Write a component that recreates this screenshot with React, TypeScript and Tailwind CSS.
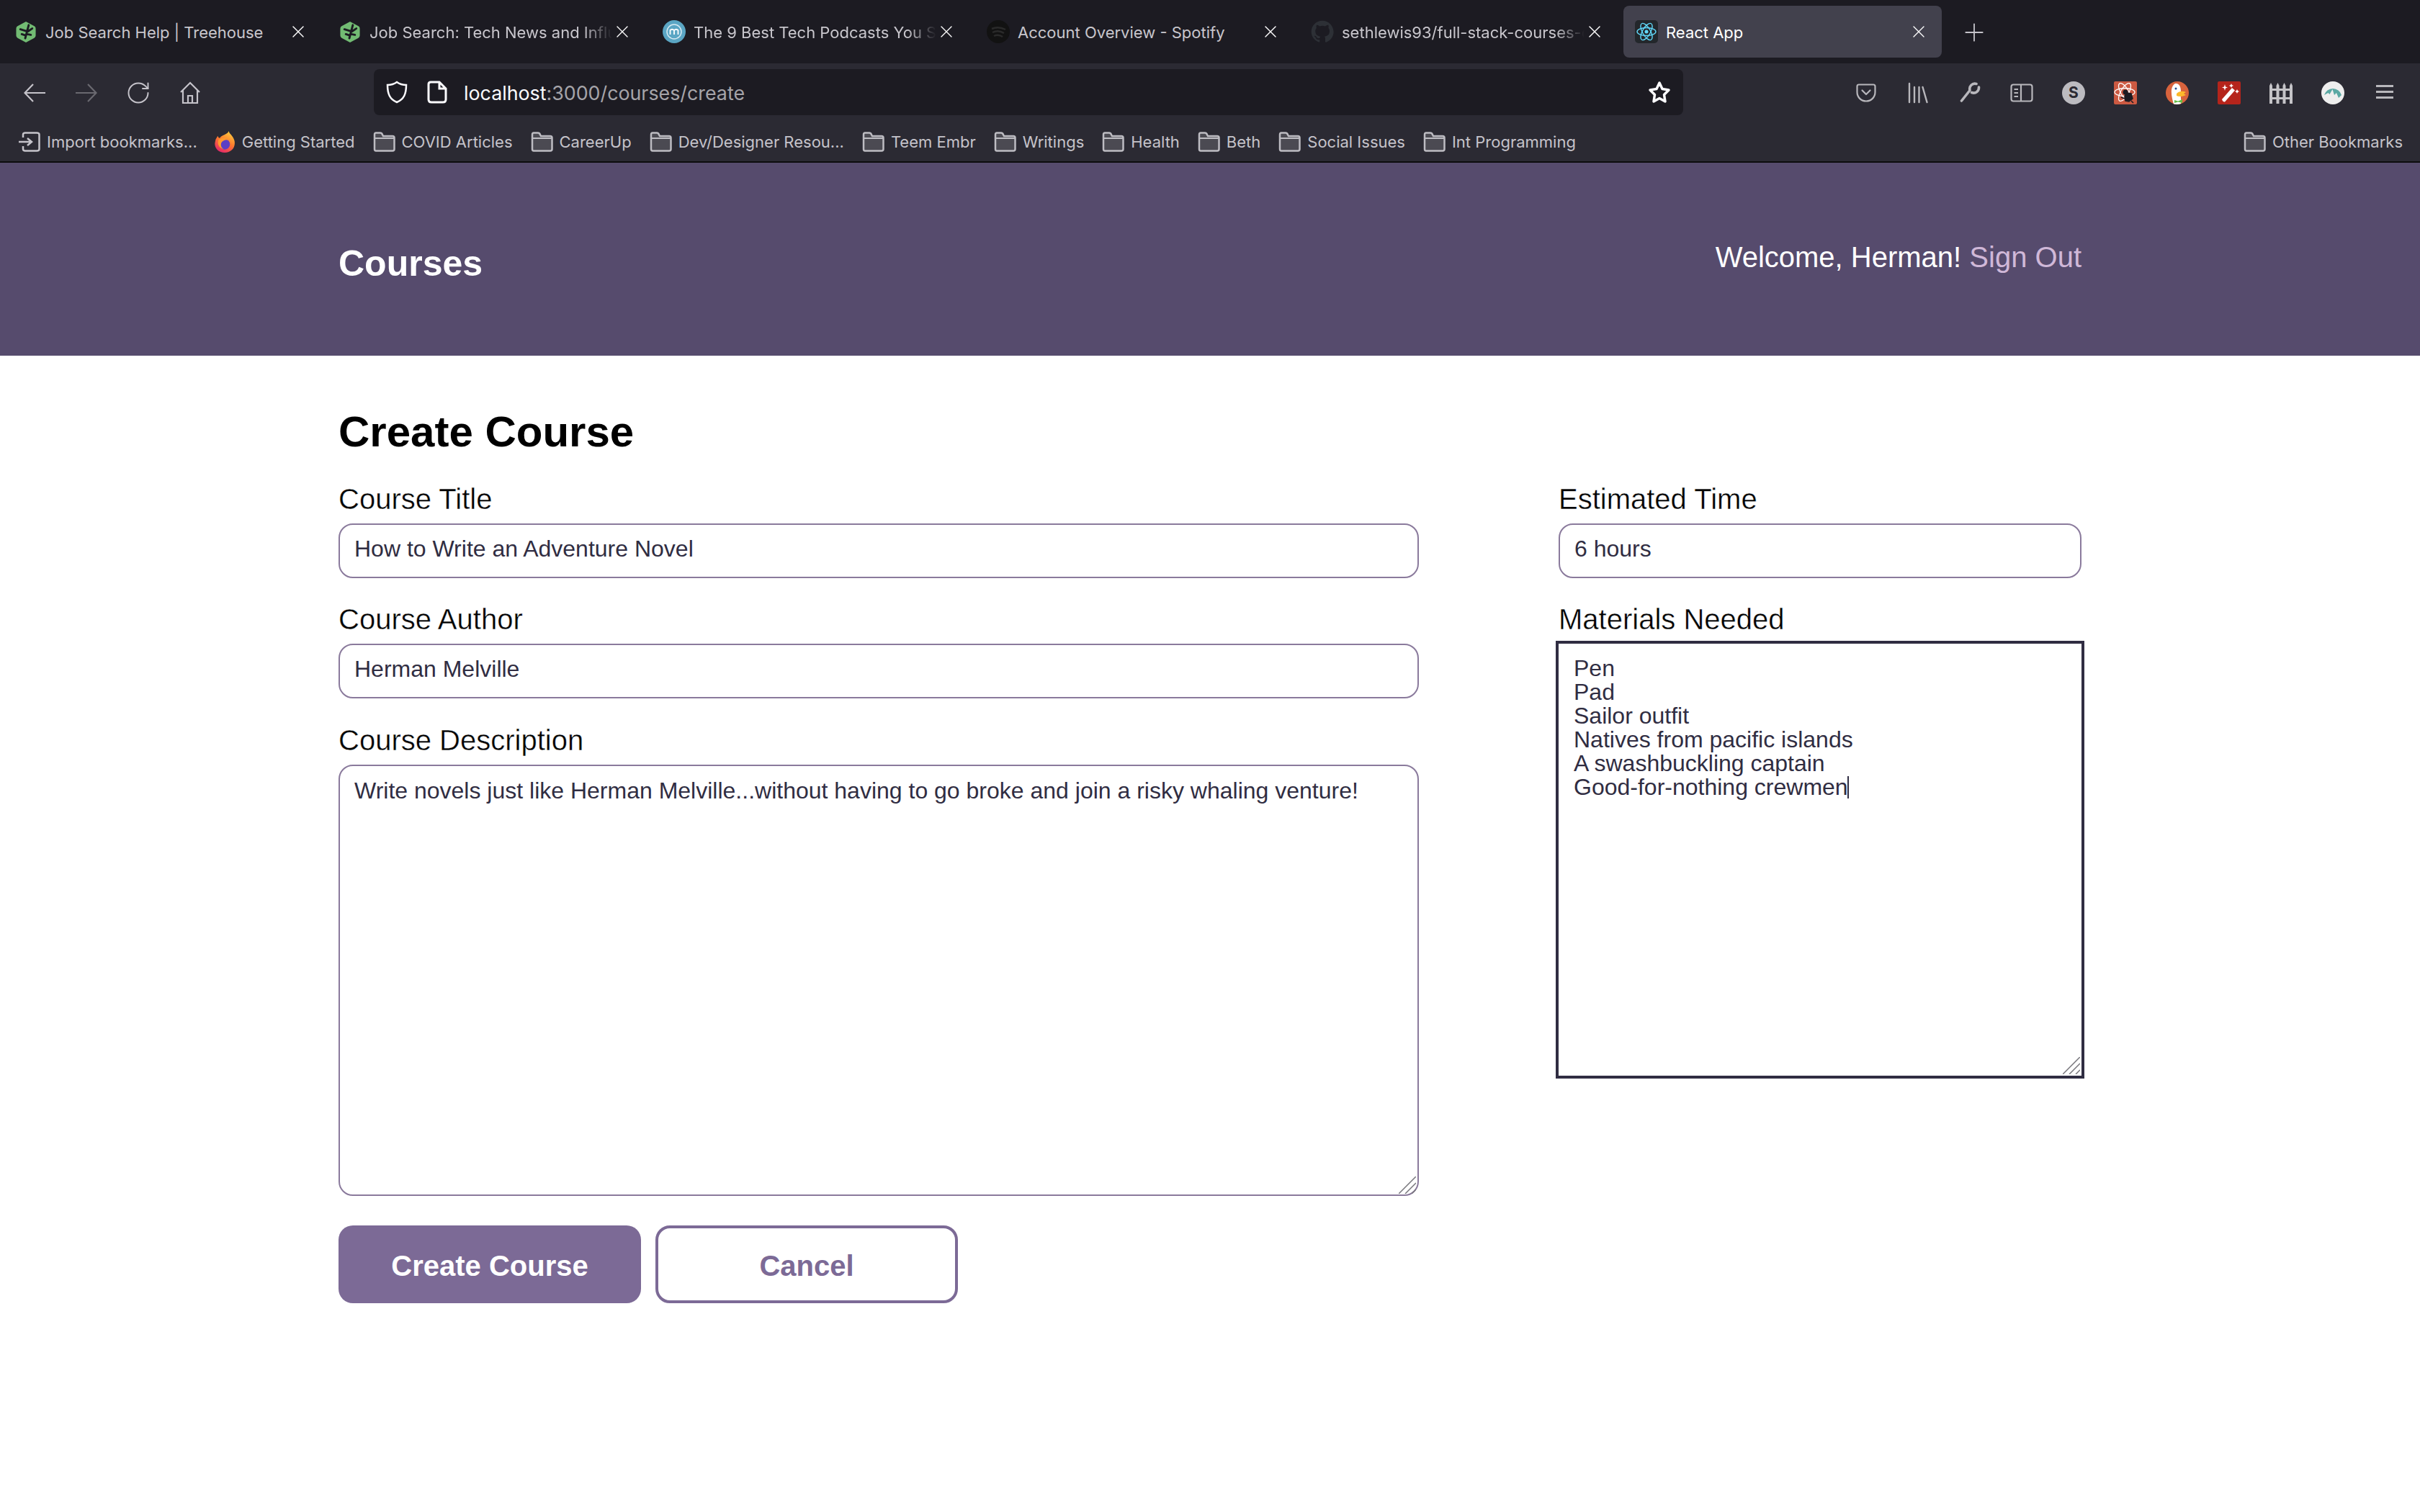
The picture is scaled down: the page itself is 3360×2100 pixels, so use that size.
import { RotateCw, Plus, X } from "lucide-react";

const TreehouseIcon = () => (
  <div className="w-8 h-8 shrink-0 flex items-center justify-center">
    <svg viewBox="0 0 28 32" className="w-[28px] h-[31px]">
      <path d="M14 1 L26 7.500 Q28 8.500 28 11 V21 Q28 23.500 26 24.500 L14 31 L2 24.500 Q0 23.500 0 21 V11 Q0 8.500 2 7.500 Z" fill="#72bb73" />
      <path d="M18 6 L13 25 M6 12 L16 15 M23 11 L17 15 M8 19 L14 21 M21 20 L15.500 19" stroke="#1c1b22" strokeWidth="3" strokeLinecap="round" fill="none" />
    </svg>
  </div>
);

const MediumIcon = () => (
  <svg viewBox="0 0 32 32" className="w-8 h-8 shrink-0">
    <circle cx="16" cy="16" r="16" fill="#5ba6c4" />
    <circle cx="16" cy="16" r="10" fill="none" stroke="#d6eaf2" strokeWidth="1.500" />
    <path d="M10.500 20 V13 M10.500 14 Q13 11.500 16 14 V20 M16 14 Q19 11.500 21.500 14 V20" fill="none" stroke="#fff" strokeWidth="1.800" />
  </svg>
);

const SpotifyIcon = () => (
  <svg viewBox="0 0 32 32" className="w-8 h-8 shrink-0">
    <circle cx="16" cy="16" r="16" fill="#121212" />
    <path d="M7 12 Q16 8 26 13 M8 17 Q16 13 24 18 M10 22 Q16 19 22 23" stroke="#2a2a2a" strokeWidth="2.500" fill="none" />
  </svg>
);

const GithubIcon = () => (
  <svg viewBox="0 0 24 24" className="w-8 h-8 shrink-0" fill="#2d3036">
    <path d="M12 .5C5.600.5.500 5.600.500 12c0 5.100 3.300 9.400 7.900 10.900.600.100.800-.300.800-.600v-2c-3.200.700-3.900-1.500-3.900-1.500-.500-1.300-1.300-1.700-1.300-1.700-1-.700.100-.700.100-.700 1.200.100 1.800 1.200 1.800 1.200 1 1.800 2.700 1.300 3.400 1 .100-.800.400-1.300.700-1.600-2.600-.300-5.300-1.300-5.300-5.700 0-1.300.500-2.300 1.200-3.100-.100-.300-.500-1.500.100-3.100 0 0 1-.300 3.200 1.200a11 11 0 0 1 5.800 0c2.200-1.500 3.200-1.200 3.200-1.200.600 1.600.200 2.800.100 3.100.700.800 1.200 1.800 1.200 3.100 0 4.400-2.700 5.400-5.300 5.700.400.400.800 1.100.800 2.200v3.200c0 .300.200.700.800.600 4.600-1.500 7.900-5.800 7.900-10.900C23.500 5.600 18.400.5 12 .5z" />
  </svg>
);

const ReactIcon = () => (
  <svg viewBox="0 0 32 32" className="w-8 h-8 shrink-0">
    <rect width="32" height="32" rx="5" fill="#23272b" />
    <g fill="none" stroke="#61dafb" strokeWidth="1.400">
      <ellipse cx="16" cy="16" rx="13" ry="5.500" />
      <ellipse cx="16" cy="16" rx="13" ry="5.500" transform="rotate(60 16 16)" />
      <ellipse cx="16" cy="16" rx="13" ry="5.500" transform="rotate(120 16 16)" />
    </g>
    <circle cx="16" cy="16" r="2.500" fill="#61dafb" />
  </svg>
);

const FolderIcon = () => (
  <svg viewBox="0 0 31 28" className="w-[31px] h-[28px] shrink-0">
    <path d="M2 4 Q2 1.500 4 1.500 H10 Q12 1.500 13 4 L14 6 H27 Q29.500 6 29.500 8.500 V24 Q29.500 26.500 27 26.500 H4 Q2 26.500 2 24 Z" fill="#4b4a52" stroke="#bdbcc2" strokeWidth="2.500" />
    <path d="M2 9 H29.500" stroke="#bdbcc2" strokeWidth="2" />
  </svg>
);

const ImportIcon = () => (
  <svg viewBox="0 0 31 28" className="w-[31px] h-[28px] shrink-0" fill="none" stroke="#c5c3ca" strokeWidth="2.500">
    <path d="M7 8 V4 Q7 1.500 10 1.500 H26 Q29.500 1.500 29.500 4 V24 Q29.500 26.500 26 26.500 H10 Q7 26.500 7 24 V20" />
    <path d="M1 14 H18 M13 9 L19 14 L13 19" />
  </svg>
);

const FirefoxIcon = () => (
  <svg viewBox="0 0 30 32" className="w-[30px] h-[31px] shrink-0">
    <defs>
      <linearGradient id="fx" x1="0.800" y1="0" x2="0.300" y2="1">
        <stop offset="0" stopColor="#ffd23f" />
        <stop offset="0.500" stopColor="#ff7a2e" />
        <stop offset="1" stopColor="#e3256b" />
      </linearGradient>
    </defs>
    <path d="M2 12 L5 7 C6 10 7 10 8 10 C11 5 18 6 21 0 C21 4 27 6 29 14 C31 24 24 31 15 31 C6 31 0 24 1 17 Z" fill="url(#fx)" />
    <circle cx="15" cy="19" r="7.500" fill="#5b3fc4" />
    <path d="M6 13 C10 9 18 9 22 14 C18 11 12 13 10 17 C9 21 10 24 14 26 C7 25 4 19 6 13 Z" fill="#ff9a2e" />
  </svg>
);

const ResizeGrip = ({ className }: { className: string }) => (
  <svg viewBox="0 0 24 24" className={`absolute w-[24px] h-[24px] ${className}`} stroke="#77767c" strokeWidth="1.500">
    <path d="M0 24 L24 0 M9 24 L24 9 M18 24 L24 18" />
  </svg>
);

const tabs = [
  { title: "Job Search Help | Treehouse", icon: <TreehouseIcon />, fade: false },
  { title: "Job Search: Tech News and Influencers", icon: <TreehouseIcon />, fade: true },
  { title: "The 9 Best Tech Podcasts You Should Listen To", icon: <MediumIcon />, fade: true },
  { title: "Account Overview - Spotify", icon: <SpotifyIcon />, fade: false },
  { title: "sethlewis93/full-stack-courses-client", icon: <GithubIcon />, fade: true },
  { title: "React App", icon: <ReactIcon />, fade: false, active: true },
];

const bookmarks = ["COVID Articles", "CareerUp", "Dev/Designer Resou...", "Teem Embr", "Writings", "Health", "Beth", "Social Issues", "Int Programming"];

const Tab = ({ title, icon, fade, active }: { title: string; icon: React.ReactNode; fade: boolean; active?: boolean }) => (
  <div className="w-[450px] h-[88px] shrink-0 px-[4px] py-[8px]">
    <div className={`h-[72px] rounded-lg flex items-center pl-[16px] pr-[18px] ${active ? "bg-[#42414d] text-white" : "text-[#c8c6cc]"}`}>
      {icon}
      <span className={`ml-[11px] pt-[2px] flex-1 min-w-0 overflow-hidden whitespace-nowrap text-[22px] ${fade ? "[mask-image:linear-gradient(to_right,black_88%,transparent)]" : ""}`}>{title}</span>
      <X className="w-7 h-7 shrink-0 text-white" strokeWidth={1.2} />
    </div>
  </div>
);

const ToolIcon = ({ children }: { children: React.ReactNode }) => (
  <div className="w-[72px] flex justify-center items-center">{children}</div>
);

const Field = ({ label, value, gap }: { label: string; value: string; gap: string }) => (
  <div className={gap}>
    <label className="block text-[40px] leading-[46px] mb-[11px] text-black [-webkit-text-stroke:0.4px_white]">{label}</label>
    <input readOnly value={value} className="block w-full h-[76px] px-[20px] pb-[5px] border-2 border-[#8a7a9c] rounded-[20px] text-[32px] text-[#302d42] outline-none" />
  </div>
);

export default function App() {
  return (
    <div className="min-h-screen bg-white font-['Liberation_Sans',Arial,sans-serif]">
      <div className="font-['Inter',sans-serif]">
        <div className="h-[88px] bg-[#1c1b22] flex items-start">
          {tabs.map((t) => (
            <Tab key={t.title} {...t} />
          ))}
          <Plus className="w-[40px] h-[40px] ml-[21px] mt-[25px] text-[#c5c3ca]" strokeWidth={1.100} />
        </div>

        <div className="h-[72px] bg-[#2b2a33] flex items-start">
          <div className="flex w-[519px] pl-[12px] h-[72px] pt-[10px]">
            <ToolIcon>
              <svg viewBox="0 0 30 26" className="w-[30px] h-[26px]" fill="none" stroke="#c5c3ca" strokeWidth="2.200">
                <path d="M30 13 H2 M13 1 L1.500 13 L13 25" />
              </svg>
            </ToolIcon>
            <ToolIcon>
              <svg viewBox="0 0 30 26" className="w-[30px] h-[26px]" fill="none" stroke="#6a6970" strokeWidth="2.200">
                <path d="M0 13 H28 M17 1 L28.500 13 L17 25" />
              </svg>
            </ToolIcon>
            <ToolIcon><RotateCw className="w-9 h-9 text-[#c5c3ca]" strokeWidth={1.300} /></ToolIcon>
            <ToolIcon>
              <svg viewBox="0 0 30 32" className="w-[30px] h-[32px]" fill="none" stroke="#c5c3ca" strokeWidth="2.200">
                <path d="M2 15 L15 2 L28 15 M5 12 V30 H25 V12 M12 30 V20 H18 V30" />
              </svg>
            </ToolIcon>
          </div>
          <div className="mt-[8px] w-[1818px] h-[64px] bg-[#1c1b22] rounded-lg flex items-center">
            <svg viewBox="0 0 30 32" className="w-[30px] h-[32px] ml-[17px]" fill="none" stroke="#fbfbfe" strokeWidth="2.500">
              <path d="M15 2 C19 5 23 6 28 6 C28 18 25 26 15 30 C5 26 2 18 2 6 C7 6 11 5 15 2 Z" />
            </svg>
            <svg viewBox="0 0 28 32" className="w-[28px] h-[32px] ml-[27px]" fill="none" stroke="#fbfbfe" strokeWidth="3">
              <path d="M5 2 H17 L26 11 V26 Q26 30 22 30 H6 Q2 30 2 26 V5 Q2 2 5 2 Z M17 2 V11 H26" />
            </svg>
            <span className="ml-[23px] pt-[2px] text-[26.800px] text-[#fbfbfe]">localhost<span className="text-[#a5a4a9]">:3000/courses/create</span></span>
            <svg viewBox="0 0 32 32" className="w-8 h-8 ml-auto mr-[17px]" fill="none" stroke="#fbfbfe" strokeWidth="3.500" strokeLinejoin="round">
              <path d="M16 3 L20 11.500 L29 13 L22.500 19.500 L24 29 L16 24.500 L8 29 L9.500 19.500 L3 13 L12 11.500 Z" />
            </svg>
          </div>
          <div className="flex ml-[218px] h-[72px] pt-[10px]">
            <ToolIcon>
              <svg viewBox="0 0 28 26" className="w-[28px] h-[26px]" fill="none" stroke="#b8b7bc" strokeWidth="2.200" strokeLinecap="round" strokeLinejoin="round">
                <path d="M4 1.500 H24 Q26.500 1.500 26.500 4 V12 C26.500 19 21 24.500 14 24.500 C7 24.500 1.500 19 1.500 12 V4 Q1.500 1.500 4 1.500 Z M8.500 9.500 L14 15 L19.500 9.500" />
              </svg>
            </ToolIcon>
            <ToolIcon>
              <svg viewBox="0 0 28 30" className="w-[28px] h-[30px]" fill="none" stroke="#b8b7bc" strokeWidth="2.400" strokeLinecap="round">
                <path d="M2 2 V28 M9 7 V28 M15.500 7 V28 M20.500 7 L26.500 28" />
              </svg>
            </ToolIcon>
            <ToolIcon>
              <svg viewBox="0 0 30 30" className="w-[30px] h-[30px]" fill="none" stroke="#b8b7bc" strokeWidth="3.600" strokeLinecap="round" strokeLinejoin="round">
                <path d="M24 2.500 C18.500 1 13.500 5.500 15 11.500 L3.500 26" />
                <path d="M27.500 7 C28 12.500 23 16.500 17.500 14.500" />
              </svg>
            </ToolIcon>
            <ToolIcon>
              <svg viewBox="0 0 32 26" className="w-[32px] h-[26px]" fill="none" stroke="#b8b7bc" strokeWidth="2.200">
                <rect x="1.500" y="1.500" width="29" height="23" rx="3" />
                <path d="M15 1.500 V24.500 M5.500 8 H11 M5.500 13 H11 M5.500 18 H11" />
              </svg>
            </ToolIcon>
            <ToolIcon>
              <span className="w-8 h-8 rounded-full bg-[#bcbbc0] text-[#2b2a33] text-[21px] font-bold flex items-center justify-center">S</span>
            </ToolIcon>
            <ToolIcon>
              <svg viewBox="0 0 32 32" className="w-8 h-8">
                <rect width="32" height="32" rx="2" fill="#cc5a42" />
                <g fill="none" stroke="#fff" strokeWidth="1.300">
                  <ellipse cx="15" cy="15" rx="14" ry="5.500" />
                  <ellipse cx="15" cy="15" rx="14" ry="5.500" transform="rotate(60 15 15)" />
                  <ellipse cx="15" cy="15" rx="14" ry="5.500" transform="rotate(120 15 15)" />
                </g>
                <circle cx="16" cy="15" r="3.500" fill="#1c1b22" />
                <path d="M18 16 L24 17 L26 24 L21 28 L16 27 L15 20 Z M15 24 L10 22 M24 27 L27 30" fill="#1c1b22" stroke="#1c1b22" strokeWidth="1.500" />
              </svg>
            </ToolIcon>
            <ToolIcon>
              <svg viewBox="0 0 32 32" className="w-8 h-8">
                <circle cx="16" cy="16" r="16" fill="#d8633d" />
                <path d="M11 31.500 C8 22 5 8 13 3 C19 2 21 8 21 14 C20 20 22 28 21 31 Q16 32.500 11 31.500 Z" fill="#fff" />
                <circle cx="14" cy="10" r="1.500" fill="#2d4f8e" />
                <path d="M15 17 C19 13 24 13 28 15 L25 17 L28 19 C24 21 19 22 15 20 Z" fill="#fdb92b" />
                <path d="M12 26 L17 27.500 L23 25 V30 L17 28.500 L12 30 Z" fill="#65bc46" />
              </svg>
            </ToolIcon>
            <ToolIcon>
              <svg viewBox="0 0 32 32" className="w-8 h-8">
                <rect width="32" height="32" rx="2" fill="#b5241b" />
                <path d="M6 25 L20 9 L24 12.500 L10 28.500 Q7.500 29 6 25 Z" fill="#fff" />
                <path d="M10 4 L11 7.500 L14 8.500 L11 9.500 L10 13 L9 9.500 L6 8.500 L9 7.500 Z M19 3 L20 5 L22 6 L20 7 L19 9 L18 7 L16 6 L18 5 Z M27 11 L28 13 L30 14 L28 15 L27 17 L26 15 L24 14 L26 13 Z" fill="#fff" />
              </svg>
            </ToolIcon>
            <ToolIcon>
              <svg viewBox="0 0 32 30" className="w-8 h-[30px]" fill="#c5c4c8">
                <path d="M0 5 L2 1 L4 5 V30 H0 Z M9.500 5 L11.500 1 L13.500 5 V30 H9.500 Z M18.500 5 L20.500 1 L22.500 5 V30 H18.500 Z M28 5 L30 1 L32 5 V30 H28 Z" />
                <rect x="0" y="9" width="32" height="3" />
                <rect x="0" y="21" width="32" height="3" />
              </svg>
            </ToolIcon>
            <ToolIcon>
              <svg viewBox="0 0 32 32" className="w-8 h-8">
                <circle cx="16" cy="16" r="16" fill="#eeeeee" />
                <path d="M4 19 A12.500 12.500 0 0 1 28 19 L24 23 L21 16 L18 19 L15.500 11 L11.500 18 L9.500 16 Z" fill="#5aa8a3" />
              </svg>
            </ToolIcon>
            <ToolIcon>
              <div className="w-[24px] flex flex-col gap-[5px] mb-[3px]">
                <div className="h-[3px] bg-[#b8b7bc]" />
                <div className="h-[3px] bg-[#b8b7bc]" />
                <div className="h-[3px] bg-[#b8b7bc]" />
              </div>
            </ToolIcon>
          </div>
        </div>

        <div className="h-[64px] bg-[#2b2a33] flex items-center text-[22px] text-[#c5c3ca] pl-[25px] pr-[24px] pt-[10px]">
          <div className="flex items-center gap-[9px] mr-[23px]"><ImportIcon /><span>Import bookmarks...</span></div>
          <div className="flex items-center gap-[9px] mr-[25px]"><FirefoxIcon /><span>Getting Started</span></div>
          {bookmarks.map((b) => (
            <div key={b} className="flex items-center gap-[9px] mr-[25px]"><FolderIcon /><span>{b}</span></div>
          ))}
          <div className="flex items-center gap-[9px] ml-auto"><FolderIcon /><span>Other Bookmarks</span></div>
        </div>
        <div className="h-[2px] bg-[#0c0c0d]" />
      </div>

      <header className="h-[268px] bg-[#564b6d]">
        <div className="w-[2420px] mx-auto h-full flex justify-between items-center text-white">
          <h2 className="text-[50px] font-bold mt-[12px]">Courses</h2>
          <p className="text-[40px] mb-[6px] text-white">Welcome, Herman! <a className="text-[#d0b8d8]">Sign Out</a></p>
        </div>
      </header>

      <main className="w-[2420px] mx-auto pt-[71px]">
        <h1 className="text-[60px] leading-[70px] font-bold text-black mb-[35px]">Create Course</h1>
        <div className="grid grid-cols-[1500px_726px] gap-x-[194px]">
          <div>
            <Field label="Course Title" value="How to Write an Adventure Novel" gap="mb-[34px]" />
            <Field label="Course Author" value="Herman Melville" gap="mb-[35px]" />
            <label className="block text-[40px] leading-[46px] mb-[11px] text-black [-webkit-text-stroke:0.4px_white]">Course Description</label>
            <div className="relative">
              <textarea readOnly value="Write novels just like Herman Melville...without having to go broke and join a risky whaling venture!" className="block w-full h-[599px] px-[20px] py-[16px] border-2 border-[#8a7a9c] rounded-[20px] text-[32px] leading-[37px] text-[#302d42] outline-none resize-none" />
              <ResizeGrip className="right-[4px] bottom-[3px]" />
            </div>
          </div>
          <div>
            <Field label="Estimated Time" value="6 hours" gap="mb-[34px]" />
            <label className="block text-[40px] leading-[46px] mb-[7px] text-black [-webkit-text-stroke:0.4px_white]">Materials Needed</label>
            <div className="relative w-[734px] -ml-[4px]">
              <textarea readOnly value={"Pen\nPad\nSailor outfit\nNatives from pacific islands\nA swashbuckling captain\nGood-for-nothing crewmen"} className="block w-full h-[608px] px-[21px] py-[18px] border-4 border-[#302d42] text-[32px] leading-[33px] text-[#302d42] outline-none resize-none" />
              <div className="absolute left-[405px] top-[188px] w-[2px] h-[31px] bg-[#302d42]" />
              <ResizeGrip className="right-[6px] bottom-[6px]" />
            </div>
          </div>
        </div>
        <div className="flex gap-[20px] mt-[41px]">
          <button className="w-[420px] h-[108px] pt-[3px] rounded-[20px] bg-[#7c6a96] text-white text-[40px] font-bold">Create Course</button>
          <button className="w-[420px] h-[108px] pt-[3px] rounded-[20px] bg-white border-4 border-[#7c6a96] text-[#7c6a96] text-[40px] font-bold">Cancel</button>
        </div>
      </main>
    </div>
  );
}
